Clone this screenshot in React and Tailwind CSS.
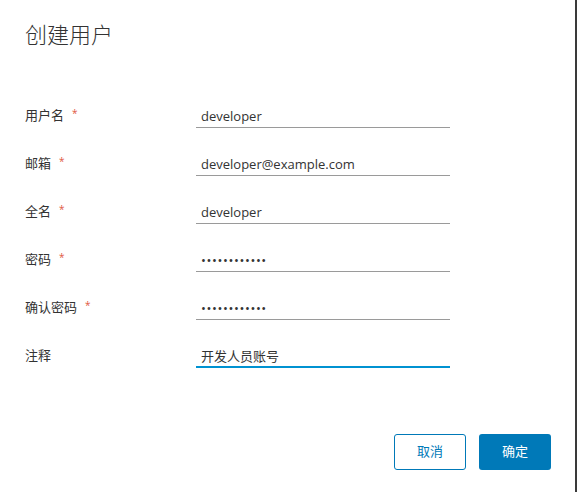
import React from "react";

const fields = [
  { label: "用户名", value: "developer", required: true },
  { label: "邮箱", value: "developer@example.com", required: true },
  { label: "全名", value: "developer", required: true },
  { label: "密码", value: "abcdefghijkl", required: true, type: "password" },
  { label: "确认密码", value: "abcdefghijkl", required: true, type: "password" },
  { label: "注释", value: "开发人员账号", required: false, focused: true },
];

function Field({ label, value, required, type, focused }) {
  return (
    <div className="flex items-center h-[48px]">
      <label className="w-[171px] text-[13px] text-[#333]">
        {label}
        {required && <span className="ml-[8px] text-[10px] text-[#e0583f] align-top">*</span>}
      </label>
      <input
        readOnly
        type={type || "text"}
        value={value}
        className={
          "w-[254px] h-[24px] px-[5px] text-[13px] text-[#333] outline-none bg-transparent " +
          (type === "password" ? "tracking-[0.6px] " : "") +
          (focused ? "border-b-2 border-[#0092d1]" : "border-b border-[#9a9a9a]")
        }
      />
    </div>
  );
}

export default function App() {
  return (
    <div
      className="w-[577px] h-[492px] bg-white border-r-2 border-[#3a3a3a] flex flex-col"
      style={{ fontFamily: '"Open Sans", "Noto Sans CJK SC", sans-serif' }}
    >
      <h1 className="pl-[25px] pt-[19px] text-[22px] font-light text-[#333] leading-[30px]">创建用户</h1>

      <div className="pl-[25px] mt-[43px] flex flex-col">
        {fields.map((f) => (
          <Field key={f.label} {...f} />
        ))}
      </div>

      <div className="mt-auto mb-[22px] mr-[24px] flex justify-end gap-[13px]">
        <button className="w-[72px] h-[36px] rounded-[3px] border border-[#0079b8] text-[#0079b8] text-[13px] bg-white">
          取消
        </button>
        <button className="w-[72px] h-[36px] rounded-[3px] bg-[#0079b8] text-white text-[13px]">
          确定
        </button>
      </div>
    </div>
  );
}
